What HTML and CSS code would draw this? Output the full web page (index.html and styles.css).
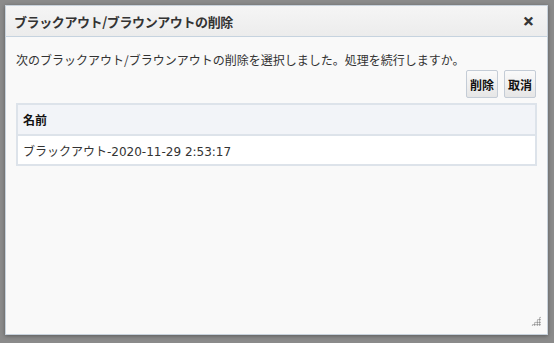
FILE: index.html
```html
<!DOCTYPE html>
<html lang="ja">

<head>
  <meta charset="UTF-8">
  <meta name="viewport" content="width=device-width, initial-scale=1.0">
  <title>ブラックアウト/ブラウンアウトの削除</title>
  <link rel="stylesheet" href="styles.css">
</head>

<body>
  <div class="overlay">
    <div class="dialog">
      <div class="dialog-header">
        <h2 class="dialog-title">ブラックアウト/ブラウンアウトの削除</h2>
        <button class="close">&#x2715;</button>
      </div>
      <div class="dialog-body">
        <p class="message">次のブラックアウト/ブラウンアウトの削除を選択しました。処理を続行しますか。</p>
        <div class="actions">
          <button class="btn">削除</button>
          <button class="btn">取消</button>
        </div>
        <table class="list">
          <thead>
            <tr>
              <th>名前</th>
            </tr>
          </thead>
          <tbody>
            <tr>
              <td>ブラックアウト-2020-11-29 2:53:17</td>
            </tr>
          </tbody>
        </table>
      </div>
      <div class="resize-handle"></div>
    </div>
  </div>
</body>

</html>
```

FILE: styles.css
```css
* {
  margin: 0;
  padding: 0;
  box-sizing: border-box;
}

body {
  font-family: "Noto Sans CJK JP", "Liberation Sans", sans-serif;
  background-color: #8b8b8b;
  width: 554px;
  height: 343px;
  overflow: hidden;
}

.overlay {
  padding: 5px 6px 0 5px;
}

.dialog {
  position: relative;
  width: 543px;
  height: 330px;
  display: flex;
  flex-direction: column;
  background: #f9f9f9;
  border: 1px solid #c8d2dc;
  box-shadow: 0 1px 4px rgba(0, 0, 0, 0.35);
}

.dialog-header {
  height: 31px;
  display: flex;
  justify-content: space-between;
  align-items: center;
  padding: 0 13px 0 8px;
  background: linear-gradient(#f5f5f5, #ececec);
  border-bottom: 1px solid #c6d3df;
}

.dialog-title {
  font-size: 13px;
  font-weight: bold;
  letter-spacing: -0.4px;
  color: #333;
  line-height: 1;
}

.close {
  background: none;
  border: none;
  font-size: 13px;
  font-weight: bold;
  color: #333;
  font-family: "DejaVu Sans", sans-serif;
  -webkit-text-stroke: 1px #333;
  cursor: pointer;
  line-height: 1;
  margin-top: 1px;
}

.dialog-body {
  flex: 1;
  padding: 14px 10px 0 10px;
}

.message {
  font-size: 12px;
  color: #333;
  line-height: 17px;
}

.actions {
  display: flex;
  justify-content: flex-end;
  gap: 6px;
  margin-top: 2px;
  padding-right: 1px;
}

.btn {
  height: 28px;
  padding: 0 3px;
  font-family: inherit;
  font-size: 12px;
  font-weight: bold;
  color: #111;
  background: linear-gradient(#fafafa, #e6e6e6);
  border: 1px solid #c4ccd6;
  border-radius: 2px;
  cursor: pointer;
}

.list {
  width: 521px;
  margin-top: 5px;
  border-collapse: collapse;
  font-size: 12px;
  color: #333;
}

.list th,
.list td {
  text-align: left;
  padding: 0 5px;
  border: 2px solid #dde3ea;
}

.list th {
  height: 31px;
  background: #f2f4f8;
  font-weight: bold;
  color: #111;
}

.list td {
  height: 30px;
  background: #fff;
  border-top-width: 1px;
  font-family: "DejaVu Sans", "Noto Sans CJK JP", sans-serif;
}

.resize-handle {
  position: absolute;
  right: 6px;
  bottom: 8px;
  width: 10px;
  height: 10px;
  background-image: radial-gradient(#777 0.8px, transparent 0.9px);
  background-size: 2.5px 2.5px;
  clip-path: polygon(100% 0, 100% 100%, 0 100%);
}
```
